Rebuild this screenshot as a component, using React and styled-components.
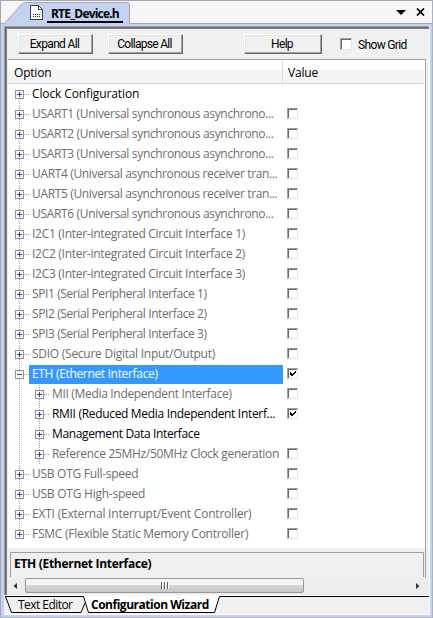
import React from "react";
import styled, { createGlobalStyle } from "styled-components";

const Global = createGlobalStyle`
  *{box-sizing:border-box}
  html,body{margin:0;padding:0;background:#fff;overflow:hidden}
  body{font-family:"Open Sans","Noto Sans",sans-serif;font-size:12px;color:#000}
`;
const Window = styled.div`
  width:433px;height:618px;display:flex;flex-direction:column;background:#c3d2f2;
  border:1px solid #a5a8ae;border-bottom-color:#a9b2c4;border-right-color:#a9b2c4;
`;
const TabStrip = styled.header`
  height:23px;flex:none;display:flex;align-items:stretch;background:#f6f6f6;border-bottom:1px solid #a5a8ae;
`;
const FileTab = styled.div`
  width:129px;height:23px;flex:none;position:relative;
`;
const TabShape = styled.svg`
  display:block;position:absolute;inset:0;
`;
const TabContent = styled.div`
  position:relative;height:22px;display:flex;padding:4px 0 0 29px;
`;
const FileName = styled.span`
  height:18px;margin-left:3px;width:76px;border-bottom:2px solid #000;padding-left:4px;
  font-weight:700;line-height:17px;white-space:nowrap;letter-spacing:-.8px;
`;
const StripActions = styled.div`
  margin-left:auto;display:flex;align-items:center;gap:10px;padding-right:7px;
`;
const Frame = styled.main`
  flex:1;min-height:0;margin:2px 2px 2px 3px;border:solid #fff;border-width:0 1px 1px 0;
  display:flex;flex-direction:column;background:#f0f0f0;
`;
const Panel = styled.section`
  flex:1;min-height:0;border:solid #a0a0a0;border-width:1px 0 0 1px;
  box-shadow:inset 1px 1px #696969,inset 2px 2px #808080;padding:2px 0 0 3px;
  display:flex;flex-direction:column;
`;
const Toolbar = styled.div`
  height:30px;flex:none;display:flex;align-items:flex-start;padding:5px 0 0 10px;
`;
const Button = styled.button`
  width:${p => p.$w}px;height:20px;margin:0 ${p => p.$gap}px 0 0;padding:1px 2px 0 0;
  background:#f0f0f0;border:1px solid;border-color:#fff #696969 #696969 #fff;border-radius:0;
  box-shadow:inset -1px -1px #a0a0a0,inset 1px 1px #e3e3e3;white-space:nowrap;
  font:12px/17px Roboto,sans-serif;color:#000;letter-spacing:${p => p.$ls || 0}px;
`;
const CheckLabel = styled.label`
  display:flex;align-items:center;height:20px;gap:6px;font:12px/20px Roboto,sans-serif;letter-spacing:-.65px;
`;
const CheckText = styled.span`
  padding-top:2px;
`;
const Box = styled.span`
  width:${p => p.$s || 11}px;height:${p => p.$s || 11}px;display:flex;flex:none;background:#fff;
  border:1px solid;border-color:#a0a0a0 #e3e3e3 #e3e3e3 #a0a0a0;box-shadow:inset 1px 1px #696969;
`;
const Grid = styled.div`
  flex:1;min-height:0;background:#fff;border-top:1px solid #a0a0a0;border-right:1px solid #a0a0a0;
  display:flex;flex-direction:column;margin-right:3px;
`;
const Head = styled.div`
  height:24px;flex:none;display:grid;grid-template-columns:275px 1fr;
  background:linear-gradient(#fff 0 42%,#f5f6f7 45%,#f1f2f4);border-bottom:1px solid #d5d5d5;line-height:26px;margin-right:1px;
`;
const HeadCell = styled.div`
  padding-left:${p => p.$pad}px;border-right:${p => p.$line ? "1px solid #dfdfe0" : "0"};letter-spacing:-.2px;
`;
const Row = styled.div`
  height:20px;display:grid;grid-template-columns:275px 1fr;flex:none;
`;
const Cell = styled.div`
  display:flex;align-items:flex-start;min-width:0;
`;
const Label = styled.span`
  height:19px;flex:${p => p.$sel ? "1" : "none"};line-height:17px;white-space:nowrap;padding-left:3px;
  color:${p => p.$sel ? "#fff" : p.$dark ? "#000" : "#6d6d6d"};background:${p => p.$sel ? "#3399ff" : "transparent"};
  letter-spacing:${p => p.$ls}px;
`;
const TreeLines = styled.svg`
  flex:none;display:block;
`;
const ValueCell = styled.div`
  padding:3px 0 0 4px;
`;
const Rows = styled.div`
  padding-top:1px;height:464px;flex:none;
`;
const Info = styled.div`
  flex:1;background:#f0f0f0;padding:4px 1px 0 2px;
`;
const InfoBox = styled.div`
  height:25px;border:1px solid #a0a0a0;border-bottom:0;font-weight:700;line-height:22px;padding-left:3px;letter-spacing:-.3px;
`;
const ScrollBar = styled.div`
  height:17px;flex:none;display:flex;align-items:flex-start;background:#ededed;
`;
const Arrow = styled.svg`
  width:17px;height:17px;flex:none;margin-left:${p => p.$end ? "auto" : 0};margin-right:${p => p.$end ? 2 : 0}px;
`;
const Thumb = styled.div`
  width:279px;height:15px;border:1px solid #979797;border-radius:2px;display:flex;align-items:center;justify-content:center;gap:1px;
  background:linear-gradient(#f5f5f5 0 45%,#d6d6d8 50%,#c7c7ca);
`;
const Grip = styled.i`
  width:2px;height:7px;background:#666;border-right:1px solid #fff;
`;
const BottomTabs = styled.footer`
  height:19px;flex:none;position:relative;
`;
const BottomLabels = styled.div`
  position:relative;display:flex;line-height:18px;padding:1px 0 0 14px;white-space:nowrap;
`;
const BottomLabel = styled.span`
  width:${p => p.$w}px;font-weight:${p => p.$on ? 700 : 400};letter-spacing:${p => p.$ls}px;
`;

const Check = () => (
  <svg width="9" height="9" shapeRendering="crispEdges">
    <path d="M2 3h1v3h-1zM3 4h1v3h-1zM4 5h1v2h-1zM5 4h1v2h-1zM6 3h1v2h-1zM7 2h1v2h-1z" />
  </svg>
);
const Tree = ({ child, open, first, last }) => (
  <TreeLines width={child ? 41 : 21} height="20" shapeRendering="crispEdges">
    <g stroke="#a0a0a0" strokeDasharray="1 1" fill="none">
      <path d={`M11.5 ${first ? 10 : 0}V${last ? 10 : 20}`} />
      {child && <path d="M31.5 0V20" />}
      <path d={child ? "M36 9.5H44" : "M16 9.5H24"} />
    </g>
    <g transform={`translate(${child ? 27 : 7} 5)`}>
      <rect x=".5" y=".5" width="8" height="8" fill="#f8f8f8" stroke="#919191" />
      <path d={open ? "M2 4.5h5" : "M2 4.5h5M4.5 2v5"} stroke="#2b4a9b" />
    </g>
  </TreeLines>
);
const items = [
  ["Clock Configuration", null, -0.12, { dark: true }],
  ["USART1 (Universal synchronous asynchrono...", 0, -0.33],
  ["USART2 (Universal synchronous asynchrono...", 0, -0.33],
  ["USART3 (Universal synchronous asynchrono...", 0, -0.33],
  ["UART4 (Universal asynchronous receiver tran...", 0, -0.35],
  ["UART5 (Universal asynchronous receiver tran...", 0, -0.35],
  ["USART6 (Universal synchronous asynchrono...", 0, -0.33],
  ["I2C1 (Inter-integrated Circuit Interface 1)", 0, -0.28],
  ["I2C2 (Inter-integrated Circuit Interface 2)", 0, -0.28],
  ["I2C3 (Inter-integrated Circuit Interface 3)", 0, -0.28],
  ["SPI1 (Serial Peripheral Interface 1)", 0, -0.4],
  ["SPI2 (Serial Peripheral Interface 2)", 0, -0.4],
  ["SPI3 (Serial Peripheral Interface 3)", 0, -0.4],
  ["SDIO (Secure Digital Input/Output)", 0, -0.26],
  ["ETH (Ethernet Interface)", 1, -0.33, { sel: true, open: true }],
  ["MII (Media Independent Interface)", 0, -0.32, { child: true }],
  ["RMII (Reduced Media Independent Interf...", 1, -0.32, { child: true, dark: true }],
  ["Management Data Interface", null, -0.36, { child: true, dark: true }],
  ["Reference 25MHz/50MHz Clock generation", 0, -0.31, { child: true }],
  ["USB OTG Full-speed", 0, -0.28],
  ["USB OTG High-speed", 0, -0.24],
  ["EXTI (External Interrupt/Event Controller)", 0, -0.21],
  ["FSMC (Flexible Static Memory Controller)", 0, -0.26],
];

export default function App() {
  return (
    <>
      <Global />
      <Window>
        <TabStrip>
          <FileTab>
            <TabShape width="129" height="23">
              <path d="M3 23L20 4Q22 1.500 25 1.500H126Q128.500 1.500 128.500 4V23" fill="#c3d2f2" stroke="#a5a8ae" />
            </TabShape>
            <TabContent>
              <svg width="14" height="16" shapeRendering="crispEdges">
                <path d="M.5 .5H8.500L12.500 4.500V14.500H.5Z" fill="#fff" stroke="#444" />
                <path d="M8.500 1V4.500H12" fill="none" stroke="#444" />
                <path d="M3 9.500H11M3 11.500H11" stroke="#222" strokeDasharray="1 1" />
              </svg>
              <FileName>RTE_Device.h</FileName>
            </TabContent>
          </FileTab>
          <StripActions>
            <svg width="10" height="5"><path d="M0 0H10L5 5Z" /></svg>
            <svg width="9" height="8"><path d="M1 .5L8 7.500M8 .5L1 7.500" stroke="#000" strokeWidth="1.700" /></svg>
          </StripActions>
        </TabStrip>
        <Frame>
          <Panel>
            <Toolbar>
              <Button $w={75} $gap={15} $ls={-0.65}>Expand All</Button>
              <Button $w={75} $gap={61} $ls={-0.7}>Collapse All</Button>
              <Button $w={78} $gap={18} $ls={-0.7}>Help</Button>
              <CheckLabel><Box $s={12} /><CheckText>Show Grid</CheckText></CheckLabel>
            </Toolbar>
            <Grid>
              <Head><HeadCell $pad={6} $line>Option</HeadCell><HeadCell $pad={5}>Value</HeadCell></Head>
              <Rows>
                {items.map(([text, v, ls, o = {}], i) => (
                  <Row key={text}>
                    <Cell>
                      <Tree child={o.child} open={o.open} first={i === 0} last={i === items.length - 1} />
                      <Label $sel={o.sel} $dark={o.dark} $ls={ls}>{text}</Label>
                    </Cell>
                    <ValueCell>{v !== null && <Box>{v === 1 && <Check />}</Box>}</ValueCell>
                  </Row>
                ))}
              </Rows>
              <Info><InfoBox>ETH (Ethernet Interface)</InfoBox></Info>
            </Grid>
            <ScrollBar>
              <Arrow><path d="M9 5v6L5.500 8Z" fill="#333" /></Arrow>
              <Thumb><Grip /><Grip /><Grip /></Thumb>
              <Arrow $end><path d="M6 5v6L9.500 8Z" fill="#333" /></Arrow>
            </ScrollBar>
          </Panel>
          <BottomTabs>
            <TabShape width="425" height="19">
              <path d="M0 0H425V1H215L210 17.500H84.500L79 1H0Z" fill="#fff" />
              <path d="M1 1.500H79.500L84.500 17.500M425 1.500H215.500L210.500 17.500M1.500 1.500L7.500 17.500H77L81 8M84.500 17.500H210.500" fill="none" stroke="#000" />
            </TabShape>
            <BottomLabels><BottomLabel $w={73} $ls={-0.55}>Text Editor</BottomLabel><BottomLabel $on $ls={-0.48}>Configuration Wizard</BottomLabel></BottomLabels>
          </BottomTabs>
        </Frame>
      </Window>
    </>
  );
}
